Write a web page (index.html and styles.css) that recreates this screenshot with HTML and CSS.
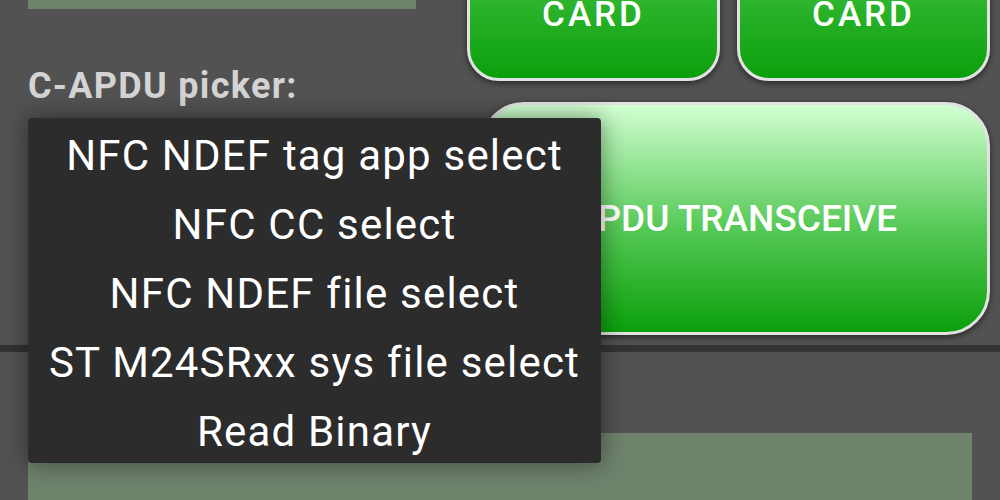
FILE: index.html
```html
<!DOCTYPE html>
<html lang="en">
<head>
    <meta charset="UTF-8">
    <meta name="viewport" content="width=device-width, initial-scale=1.0">
    <title>C-APDU picker</title>
    <link rel="stylesheet" href="styles.css">
</head>
<body>
    <div class="screen">
        <div class="top">
            <div class="left">
                <div class="field"></div>
                <div class="label">C-APDU picker:</div>
            </div>
            <div class="right">
                <div class="card-row">
                    <button class="btn card-btn">CARD</button>
                    <button class="btn card-btn">CARD</button>
                </div>
                <button class="btn big-btn">APDU TRANSCEIVE</button>
            </div>
        </div>
        <div class="divider"></div>
        <div class="lower">
            <div class="field output"></div>
        </div>

        <ul class="menu">
            <li>NFC NDEF tag app select</li>
            <li>NFC CC select</li>
            <li>NFC NDEF file select</li>
            <li>ST M24SRxx sys file select</li>
            <li>Read Binary</li>
        </ul>
    </div>
</body>
</html>
```

FILE: styles.css
```css
:root { --bg: #525252; --field: #6e826c; --menu: #2c2c2c; --rim: #e2e2e2; --green: #0b9f0b; }
html, body { margin: 0; height: 100%; overflow: hidden; }
body { background: var(--bg); font-family: Roboto, "Liberation Sans", sans-serif; }
.screen { position: relative; margin-top: -50px; }
.top { display: flex; padding: 0 10px 0 28px; }
.left { width: 388px; }
.field { background: var(--field); height: 59px; }
.label { margin-top: 56px; font-size: 36px; font-weight: 700; color: #d4d4d4; letter-spacing: 1.3px; }
.right { flex: 1; margin-left: 51px; }
.card-row { display: flex; gap: 17px; }
.btn { display: flex; align-items: center; justify-content: center; border: 3px solid var(--rim); color: #fff; font-family: Roboto, sans-serif; font-weight: 500; box-shadow: 0 2px 6px rgba(0,0,0,0.55); box-sizing: border-box; }
.card-btn { flex: 1; height: 131px; padding-bottom: 3px; border-radius: 32px; font-size: 35px; background: linear-gradient(#42c242, var(--green)); letter-spacing: 3px; }
.big-btn { width: 510px; height: 233px; margin: 21px 0 0 13px; border-radius: 44px; font-size: 37px; background: linear-gradient(#d2ffd2, #54c854 55%, var(--green)); }
.divider { height: 7px; margin-top: 10px; background: #333; }
.lower { padding: 81px 28px 0; }
.output { height: 67px; }
.menu { position: absolute; left: 28px; top: 168px; width: 573px; margin: 0; padding: 3px 0 0; list-style: none; background: var(--menu); border-radius: 4px; box-shadow: 0 0 24px rgba(0,0,0,0.45); box-sizing: border-box; height: 345px; }
.menu li { height: 69px; line-height: 69px; text-align: center; color: #fff; font-size: 42px; letter-spacing: 1.2px; }
```
